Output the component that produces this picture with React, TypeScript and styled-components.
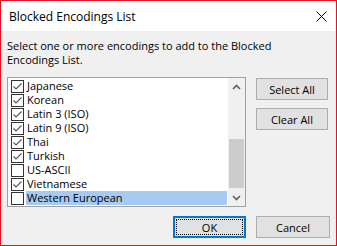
import React from "react";
import styled, { createGlobalStyle } from "styled-components";

const Global = createGlobalStyle`
  html, body { margin: 0; padding: 0; background: #ffffff; }
  body { font-family: "Open Sans", "Noto Sans", sans-serif; font-size: 11px; color: #000; }
  * { box-sizing: border-box; }
`;

const Window = styled.div`
  width: 337px;
  height: 246px;
  border: 1px solid #e81123;
  display: flex;
  flex-direction: column;
  background: #f0f0f0;
`;

const TitleBar = styled.div`
  height: 30px;
  background: #ffffff;
  display: flex;
  align-items: center;
  justify-content: space-between;
  padding: 0 9px 0 8px;
  font-size: 12px;
`;

const CloseButton = styled.div`
  width: 12px;
  height: 12px;
  display: flex;
  align-items: center;
  justify-content: center;
`;

const Body = styled.div`
  flex: 1;
  display: flex;
  flex-direction: column;
  padding: 6px 6px 0 6px;
`;

const Prompt = styled.div`
  line-height: 14px;
  height: 40px;
  padding-top: 2px;
`;

const MainRow = styled.div`
  display: flex;
  gap: 10px;
  align-items: flex-start;
`;

const ListBox = styled.div`
  width: 239px;
  height: 130px;
  border: 1px solid #a0a0a0;
  background: #ffffff;
  display: flex;
`;

const Items = styled.div`
  flex: 1;
  padding: 1px 1px 0 0;
  display: flex;
  flex-direction: column;
`;

const Row = styled.div`
  height: 14px;
  display: flex;
  align-items: center;
  padding-left: 3px;
`;

const Box = styled.div`
  width: 13px;
  height: 13px;
  border: 1px solid #333333;
  background: #ffffff;
  display: flex;
  align-items: center;
  justify-content: center;
`;

const Label = styled.div<{ $selected?: boolean }>`
  flex: 1;
  margin-left: 2px;
  padding-left: 1px;
  height: 14px;
  line-height: 14px;
  background: ${(p) => (p.$selected ? "#a6caf0" : "transparent")};
  white-space: nowrap;
`;

const ScrollBar = styled.div`
  width: 17px;
  background: #f0f0f0;
  display: flex;
  flex-direction: column;
`;

const ArrowBtn = styled.div`
  height: 17px;
  display: flex;
  align-items: center;
  justify-content: center;
`;

const Track = styled.div`
  flex: 1;
  display: flex;
  flex-direction: column;
  justify-content: flex-end;
`;

const Thumb = styled.div`
  height: 49px;
  margin: 0 1px 1px 1px;
  background: #cdcdcd;
`;

const SideButtons = styled.div`
  display: flex;
  flex-direction: column;
  gap: 8px;
  padding-top: 1px;
`;

const Button = styled.button<{ $w: number; $default?: boolean }>`
  width: ${(p) => p.$w}px;
  height: 22px;
  font: inherit;
  color: #000;
  background: #e1e1e1;
  border: ${(p) => (p.$default ? "2px solid #0078d7" : "1px solid #adadad")};
  padding: 0;
  position: relative;
  outline: ${(p) => (p.$default ? "1px dotted #000" : "none")};
  outline-offset: -4px;
`;

const Footer = styled.div`
  display: flex;
  justify-content: flex-end;
  gap: 10px;
  padding: 9px 0 0 0;
  padding-right: 0;
`;

const Check = () => (
  <svg width="11" height="11" viewBox="0 0 11 11">
    <polyline points="1.5,5.5 4,8 9.5,2.5" fill="none" stroke="#555" strokeWidth="1.1" />
  </svg>
);

const items: { name: string; checked: boolean; selected?: boolean }[] = [
  { name: "Japanese", checked: true },
  { name: "Korean", checked: true },
  { name: "Latin 3 (ISO)", checked: true },
  { name: "Latin 9 (ISO)", checked: true },
  { name: "Thai", checked: true },
  { name: "Turkish", checked: true },
  { name: "US-ASCII", checked: false },
  { name: "Vietnamese", checked: true },
  { name: "Western European", checked: false, selected: true },
];

export default function App() {
  return (
    <>
      <Global />
      <Window>
        <TitleBar>
          <span>Blocked Encodings List</span>
          <CloseButton>
            <svg width="11" height="11" viewBox="0 0 11 11">
              <path d="M0.5 0.5 L10.5 10.5 M10.5 0.5 L0.5 10.5" stroke="#000" strokeWidth="1" />
            </svg>
          </CloseButton>
        </TitleBar>
        <Body>
          <Prompt>
            Select one or more encodings to add to the Blocked
            <br />
            Encodings List.
          </Prompt>
          <MainRow>
            <ListBox>
              <Items>
                {items.map((it) => (
                  <Row key={it.name}>
                    <Box>{it.checked && <Check />}</Box>
                    <Label $selected={it.selected}>{it.name}</Label>
                  </Row>
                ))}
              </Items>
              <ScrollBar>
                <ArrowBtn>
                  <svg width="9" height="6" viewBox="0 0 9 6">
                    <path d="M1 5 L4.5 1.5 L8 5" fill="none" stroke="#606060" strokeWidth="1.6" />
                  </svg>
                </ArrowBtn>
                <Track>
                  <Thumb />
                </Track>
                <ArrowBtn>
                  <svg width="9" height="6" viewBox="0 0 9 6">
                    <path d="M1 1 L4.5 4.5 L8 1" fill="none" stroke="#606060" strokeWidth="1.6" />
                  </svg>
                </ArrowBtn>
              </ScrollBar>
            </ListBox>
            <SideButtons>
              <Button $w={72}>Select All</Button>
              <Button $w={72}>Clear All</Button>
            </SideButtons>
          </MainRow>
          <Footer>
            <Button $w={73} $default>OK</Button>
            <Button $w={74}>Cancel</Button>
          </Footer>
        </Body>
      </Window>
    </>
  );
}
